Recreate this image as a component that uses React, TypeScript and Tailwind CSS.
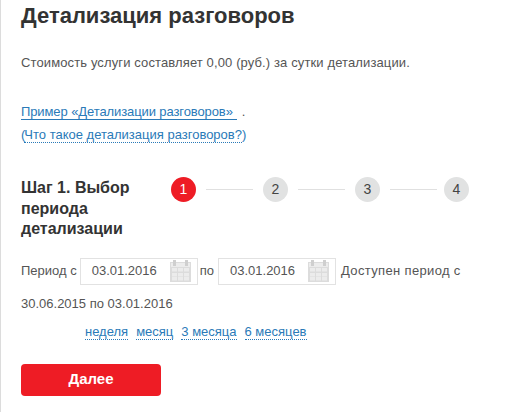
const Cal = () => (
  <svg width="21" height="22" viewBox="0 0 21 22" className="shrink-0">
    <rect x="0" y="2" width="21" height="20" fill="#dcdcdc" />
    <rect x="1" y="3" width="19" height="4" fill="#ececec" />
    <rect x="3" y="0" width="3" height="6" fill="#cfcfcf" />
    <rect x="15" y="0" width="3" height="6" fill="#cfcfcf" />
    {[8, 13, 17].map((y) =>
      [2, 8, 14].map((x) => <rect key={`${x}-${y}`} x={x} y={y} width="5" height="3.5" fill="#ececec" />)
    )}
  </svg>
);

const DateField = () => (
  <div className="flex items-center justify-between w-[118px] h-[27px] border border-[#e2e2e2] pl-[11px] pr-[6px]">
    <span className="text-[13px] text-[#555]">03.01.2016</span>
    <Cal />
  </div>
);

const Step = ({ n, active }: { n: number; active?: boolean }) => (
  <div
    className={`flex items-center justify-center w-[25px] h-[25px] rounded-full text-[14px] shrink-0 ${
      active ? "bg-[#ee1c25] text-white" : "bg-[#e1e2e2] text-[#444]"
    }`}
  >
    {n}
  </div>
);

const Line = () => <div className="h-px w-[47px] bg-[#e0e0e0] mb-[1px]" />;

const Dotted = ({ children }: { children: string }) => (
  <a className="text-[#2a7ab8] border-b border-dotted border-[#2a7ab8] leading-[15px]">{children}</a>
);

export default function App() {
  return (
    <div className="w-[508px] h-[412px] overflow-hidden bg-white border-l border-[#dcdcdc] pl-[20px] font-['Liberation_Sans',Arial,sans-serif] text-[#555] text-[13px]">
      <h1 className="text-[22px] leading-[26px] font-bold text-[#333] mt-[3px]">Детализация разговоров</h1>
      <p className="mt-[26px] leading-[16px] tracking-[0.12px]">Стоимость услуги составляет 0,00 (руб.) за сутки детализации.</p>
      <div className="mt-[33px] leading-[16px] flex">
        <a className="text-[#2a7ab8] border-b border-[#2a7ab8] pr-[4px] leading-[15px] tracking-[-0.1px]">Пример «Детализации разговоров»</a>
        <span className="ml-[5px]">.</span>
      </div>
      <div className="mt-[7px] leading-[16px] text-[#2a7ab8] flex">
        (<a className="border-b border-dotted border-[#2a7ab8] leading-[15px] -ml-px">Что такое детализация разговоров?</a>)
      </div>

      <div className="flex mt-[30px]">
        <div className="w-[150px] text-[16px] leading-[20.5px] font-bold text-[#333] mt-[5px]">Шаг 1. Выбор периода детализации</div>
        <div className="flex items-center gap-[10px] h-[25px] mt-[4px]">
          <Step n={1} active />
          <Line />
          <Step n={2} />
          <Line />
          <Step n={3} />
          <Line />
          <div className="-ml-[3px]"><Step n={4} /></div>
        </div>
      </div>

      <div className="flex items-center mt-[18px] h-[27px]">
        <span>Период с</span>
        <div className="ml-[3px]"><DateField /></div>
        <span className="mx-[2px]">по</span>
        <div className="ml-[2px]"><DateField /></div>
        <span className="ml-[5px] whitespace-nowrap tracking-[0.35px]">Доступен период с</span>
      </div>
      <div className="mt-[11px] leading-[16px]">30.06.2015 по 03.01.2016</div>

      <div className="flex gap-[8px] mt-[12px] ml-[64px] text-[13px] leading-[16px]">
        <Dotted>неделя</Dotted>
        <Dotted>месяц</Dotted>
        <Dotted>3 месяца</Dotted>
        <Dotted>6 месяцев</Dotted>
      </div>

      <button className="mt-[24px] w-[140px] h-[32px] bg-[#ee1c25] rounded-[4px] text-white font-bold text-[15px] flex items-center justify-center">Далее</button>
    </div>
  );
}
